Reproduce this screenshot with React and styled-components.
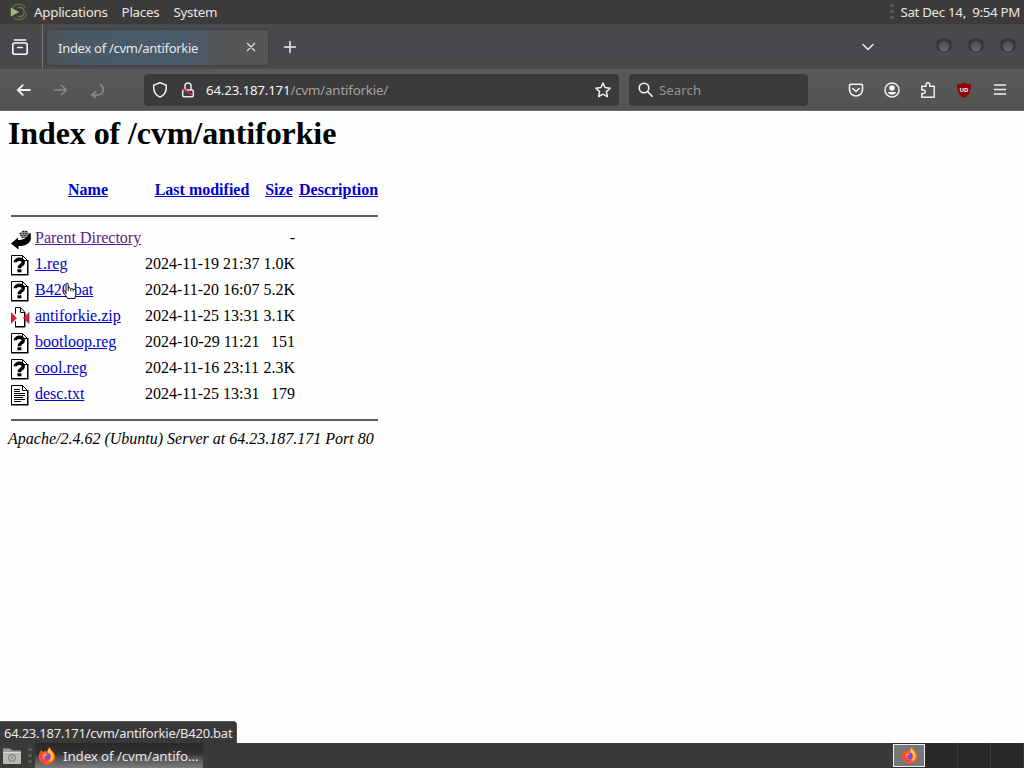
import styled, { createGlobalStyle } from "styled-components";

const files = [
  { icon: "unknown", name: "1.reg", date: "2024-11-19 21:37", size: "1.0K" },
  { icon: "unknown", name: "B420.bat", date: "2024-11-20 16:07", size: "5.2K" },
  { icon: "zip", name: "antiforkie.zip", date: "2024-11-25 13:31", size: "3.1K" },
  { icon: "unknown", name: "bootloop.reg", date: "2024-10-29 11:21", size: "151" },
  { icon: "unknown", name: "cool.reg", date: "2024-11-16 23:11", size: "2.3K" },
  { icon: "text", name: "desc.txt", date: "2024-11-25 13:31", size: "179" },
];

const App = () => (
  <Desktop>
    <GlobalStyle />
    <TopPanel>
      <DistroLogo />
      <MenuItem>Applications</MenuItem>
      <MenuItem>Places</MenuItem>
      <MenuItem>System</MenuItem>
      <Handle />
      <Clock>Sat Dec 14,&nbsp; 9:54 PM</Clock>
    </TopPanel>

    <TabBar>
      <ViewButton>
        <ViewIcon />
      </ViewButton>
      <Tab>
        <TabTitle>Index of /cvm/antiforkie</TabTitle>
        <Icon $size={10} $width={1.2} viewBox="0 0 10 10">
          <path d="M1.4 1.4l7.2 7.2M8.600 1.400L1.400 8.600" />
        </Icon>
      </Tab>
      <NewTab $size={14} viewBox="0 0 14 14">
        <path d="M7 1.500v11M1.500 7h11" />
      </NewTab>
      <ListTabs $size={14} viewBox="0 0 14 14">
        <path d="M2 4.500L7 9.500l5-5" />
      </ListTabs>
      <WindowButtons>
        <WindowButton />
        <WindowButton />
        <WindowButton />
      </WindowButtons>
    </TabBar>

    <NavBar>
      <NavButtons>
        <Icon $size={16} viewBox="0 0 16 16" $width={1.8}>
          <path d="M14 8H2M6.800 3.200L1.800 8L6.800 12.800" />
        </Icon>
        <Icon $size={16} viewBox="0 0 16 16" $color="#8a8a8a">
          <path d="M1.500 8H13M8.400 3.200L13.400 8L8.400 12.800" />
        </Icon>
        <Icon $size={16} viewBox="0 0 16 16" $color="#8a8a8a" $width={1.7}>
          <path d="M10.500 2.500c5 3.500 3 10-2.500 10.500H2.500M5.500 9.500L2 13L5.500 15.500" />
        </Icon>
      </NavButtons>
      <UrlField>
        <Icon $size={16} viewBox="0 0 16 16">
          <path d="M8 .8L14.200 3.100C14.700 8 13 12.700 8 15.200C3 12.700 1.300 8 1.800 3.100Z" strokeLinejoin="round" />
        </Icon>
        <LockIcon />
        <Url>
          <b>64.23.187.171</b>/cvm/antiforkie/
        </Url>
        <Icon $size={16} viewBox="0 0 16 16">
          <path d="M8 1l2.100 4.600 5 .6-3.700 3.400 1 5L8 12.100l-4.400 2.500 1-5L.9 6.200l5-.6z" strokeLinejoin="round" />
        </Icon>
      </UrlField>
      <SearchField>
        <Icon $size={15} viewBox="0 0 15 15" $width={1.6}>
          <circle cx="6" cy="6" r="4.800" />
          <path d="M9.500 9.500l4.700 4.700" />
        </Icon>
        Search
      </SearchField>
      <Tools>
        <Icon $size={16} viewBox="0 0 16 16" $width={1.6}>
          <path d="M2.800 2.200h10.400a1.300 1.300 0 0 1 1.300 1.300V7.500a6.500 6.500 0 0 1-13 0V3.500a1.300 1.300 0 0 1 1.300-1.300zM4.800 6.500L8 9.500l3.200-3" strokeLinejoin="round" />
        </Icon>
        <Icon $size={16} viewBox="0 0 16 16">
          <circle cx="8" cy="8" r="7" />
          <circle cx="8" cy="6" r="2.800" fill="#fbfbfe" stroke="none" />
          <path d="M3.800 10h8.400c-1.200 3.600-7.200 3.600-8.400 0z" fill="#fbfbfe" stroke="none" />
        </Icon>
        <Icon $size={16} viewBox="0 0 16 16">
          <path d="M1.800 4.200h4.200V2.700a1.900 1.900 0 0 1 3.800 0v1.500h4.400v11H1.800v-3.700h1.800a1.700 1.700 0 0 0 0-3.400H1.800z" strokeLinejoin="round" />
        </Icon>
        <Blocker />
        <Icon $size={16} viewBox="0 0 16 16">
          <path d="M2.500 3h11M2.500 7.500h11M2.500 12h11" />
        </Icon>
      </Tools>
    </NavBar>

    <Page>
      <Title>Index of /cvm/antiforkie</Title>
      <Listing>
        <colgroup>
          <col width="22" />
          <col width="108" />
          <col width="116" />
          <col width="34" />
          <col width="81" />
        </colgroup>
        <thead>
          <HeadRow>
            <th />
            <th>
              <Link>Name</Link>
            </th>
            <th>
              <Link>Last modified</Link>
            </th>
            <th>
              <Link>Size</Link>
            </th>
            <th>
              <Link>Description</Link>
            </th>
          </HeadRow>
        </thead>
        <tbody>
          <RuleRow $height={19} $below={8}>
            <td colSpan="5">
              <Rule />
            </td>
          </RuleRow>
          <FileRow>
            <td>
              <FileIcon type="back" />
            </td>
            <td>
              <Link $visited>Parent Directory</Link>
            </td>
            <td />
            <NumberCell>-</NumberCell>
            <td />
          </FileRow>
          {files.map((file) => (
            <FileRow key={file.name}>
              <td>
                <FileIcon type={file.icon} />
              </td>
              <td>
                <Link>{file.name}</Link>
              </td>
              <NumberCell>{file.date}</NumberCell>
              <NumberCell>{file.size}</NumberCell>
              <td />
            </FileRow>
          ))}
          <RuleRow $height={23} $below={9}>
            <td colSpan="5">
              <Rule />
            </td>
          </RuleRow>
        </tbody>
      </Listing>
      <Address>Apache/2.4.62 (Ubuntu) Server at 64.23.187.171 Port 80</Address>
      <HandCursor />
      <StatusPopup>64.23.187.171/cvm/antiforkie/B420.bat</StatusPopup>
    </Page>

    <BottomPanel>
      <FolderIcon />
      <TaskHandle />
      <Task>
        <Firefox size={18} />
        <span>Index of /cvm/antifo…</span>
      </Task>
      <Workspaces>
        <Workspace $active>
          <Firefox size={17} />
        </Workspace>
        <Workspace />
        <Workspace />
        <Workspace />
      </Workspaces>
    </BottomPanel>
  </Desktop>
);

export default App;

const DistroLogo = () => (
  <Logo width="18" height="18" viewBox="0 0 18 18">
    <circle cx="9" cy="9" r="7.800" fill="none" stroke="#5f7047" strokeWidth="1.200" strokeDasharray="18 3 23 5" />
    <path d="M8 4.600a4.700 4.700 0 1 1 0 8.800" fill="none" stroke="#667a4c" strokeWidth="1.300" />
    <path d="M.8 4.600L9.200 9L.8 13.400z" fill="#a3b86c" />
  </Logo>
);

const ViewIcon = () => (
  <svg width="16" height="16" viewBox="0 0 16 16" fill="none" stroke="#fbfbfe" strokeWidth="1.600">
    <path d="M2.500 1h11" strokeLinecap="round" />
    <rect x=".8" y="4" width="14.400" height="11.200" rx="2" />
    <path d="M5.700 8.500h4.600" strokeLinecap="round" />
  </svg>
);

const LockIcon = () => (
  <svg width="16" height="16" viewBox="0 0 16 16" fill="none" stroke="#e8e8ea" strokeWidth="1.500">
    <path d="M5 8V4a3 3 0 0 1 6 0v4" />
    <rect x="2.700" y="8" width="10.600" height="6.800" rx="1.200" />
    <path d="M2.500 6.500L12 13" stroke="#c62a4c" strokeWidth="1.900" />
  </svg>
);

const Blocker = () => (
  <svg width="16" height="16" viewBox="0 0 16 16">
    <path d="M8 .4C10.200 1.700 12.500 2.400 14.800 2.400C15.200 9.500 12.700 13.500 8 15.700C3.300 13.500.8 9.500 1.200 2.400C3.500 2.400 5.800 1.700 8 .4z" fill="#950000" />
    <text x="8" y="10" textAnchor="middle" fill="#fff" fontSize="6" fontWeight="700" fontFamily="Noto Sans, sans-serif">
      UD
    </text>
  </svg>
);

const FileIcon = ({ type }) => (
  <ListIcon width="20" height="22" viewBox="1 0 20 22">
    {type === "back" && (
      <g>
        <path d="M1 15.500L8 9.500V12C12 12 17.500 10.500 18 6L20.800 5V11C20 16 14 18.500 8.500 18V21.500z" fill="#000" />
        <path d="M9.500 5l4-2.500 4 .5 1.500 2.500-2 3.500-4 1-3-2z" fill="#999" />
        <path d="M9.500 5.500h8M10.500 7.500h7M12 3.500h5M11.500 9.500h5" stroke="#222" strokeDasharray="2 1" />
      </g>
    )}
    {(type === "unknown" || type === "text") && (
      <g>
        <path d="M1.500 1.500h11l5 5v14h-16z" fill="#fff" stroke="#000" />
        <path d="M12.500 1.500v5h5z" fill="#fff" stroke="#000" />
        <path d="M1 21h17.500M18 6v15" stroke="#000" />
      </g>
    )}
    {type === "unknown" && (
      <g>
        <path d="M5.300 8.300C5.300 4.300 13.500 4.300 13.300 8.300C13.200 11.200 9.400 10.800 9.300 14.200" fill="none" stroke="#000" strokeWidth="3.400" />
        <rect x="7.400" y="15.300" width="4" height="3" fill="#000" />
      </g>
    )}
    {type === "text" && <path d="M4 5.500h6M4 7.500h6M4 9.500h11M4 11.500h11M4 13.500h9M4 15.500h11M4 17.500h7" stroke="#000" />}
    {type === "zip" && (
      <g>
        <path d="M5.500 1.500h5l4 5v14h-9z" fill="#fff" />
        <path d="M5.500 8V1.500h5l4 4.500V20.500h-9V15M10.500 1.500v5h4" fill="none" stroke="#000" />
        <path d="M5 21h10M15 6v15" stroke="#000" />
        <path d="M1 6.500L6.500 12L1 17.500zM19 6.500L13.500 12L19 17.500z" fill="#dd2337" stroke="#7a2029" strokeWidth=".6" />
      </g>
    )}
  </ListIcon>
);

const Firefox = ({ size }) => (
  <svg width={size} height={size} viewBox="0 0 18 18">
    <path d="M3.300 3.200L5 5.200C6 4 8 4 9 4.500C9.500 2.500 10.500 1 12 .5C12 3 15 3.500 16.200 6.500C20 14 12 19 6.500 17C0 14.500-.8 8 3.300 3.200z" fill="#ff5b2d" />
    <path d="M12 .5C11 4 17 5 15.500 11C14.700 14 12 15 10.500 14.500C14 11 13 8 10 5.500C9.500 3 10.500 1.500 12 .5z" fill="#ffc735" />
    <path d="M2.500 5L5.500 6.500L4 10C4 13 7 14.500 10 13.500C8 17.500 1.500 15 1.300 10z" fill="#ff3d47" />
    <circle cx="9" cy="9.500" r="3.400" fill="#8547d8" />
    <path d="M4.500 7.500c2-1.500 4-.8 5.500 0L7.500 9c-1 .8-.8 1.800.3 2.500C6 12 4.200 10 4.500 7.500z" fill="#ff9136" />
  </svg>
);

const FolderIcon = () => (
  <Folder width="20" height="18" viewBox="0 0 20 18">
    <path d="M1 1.500h7l2 2h9v4H1z" fill="#9a9d94" />
    <rect x="1" y="5" width="18" height="12" rx="1" fill="#b8bab2" />
    <path d="M1 5.500h18" stroke="#dadcd4" />
    <circle cx="10" cy="11" r="3.300" fill="none" stroke="#85887f" strokeWidth="1.300" />
    <path d="M9 9.500l2.500 1.500L9 12.500z" fill="#85887f" />
  </Folder>
);

const HandCursor = () => (
  <Cursor width="16" height="18" viewBox="0 0 16 18">
    <path
      d="M4 11.500V2.300C4 .7 6.200.7 6.200 2.300V6.200C7.500 5.300 8.600 5.800 8.700 6.700C9.800 6.100 11 6.600 11.100 7.500C12.500 7 13.800 7.600 13.800 9V12.500C13.800 14 13 14.700 13 16.500H5.500C5 14.500 2.200 12 1.200 9.800C.8 8.500 2.200 8 3 9z"
      fill="#fff"
      stroke="#111"
    />
    <path d="M6.200 6v3M8.700 7v2.500M11.100 7.500v2" stroke="#111" strokeWidth=".9" />
  </Cursor>
);

const GlobalStyle = createGlobalStyle`
  * {
    box-sizing: border-box;
  }
  body {
    margin: 0;
    overflow: hidden;
  }
`;

const Desktop = styled.div`
  display: flex;
  flex-direction: column;
  width: 1024px;
  height: 768px;
  font-family: "Noto Sans", sans-serif;
  font-size: 13.33px;
  color: #e6e6e6;
`;

const TopPanel = styled.div`
  display: flex;
  align-items: center;
  height: 24px;
  padding: 0 4px 0 10px;
  background: #3c3b39;
  letter-spacing: -0.25px;
`;

const Logo = styled.svg`
  margin-right: 6px;
`;

const MenuItem = styled.span`
  margin-right: 14px;
  white-space: nowrap;
`;

const Handle = styled.div`
  width: 4px;
  height: 16px;
  margin-left: auto;
  background: repeating-linear-gradient(#575754 0 3px, transparent 3px 6px);
`;

const Clock = styled.span`
  margin-left: 6px;
  letter-spacing: -0.32px;
  white-space: nowrap;
`;

const TabBar = styled.div`
  display: flex;
  align-items: center;
  height: 45px;
  background: linear-gradient(#4b4b4c, #48474d 45%, #4b4b4c);
`;

const ViewButton = styled.div`
  display: flex;
  align-items: center;
  width: 43px;
  height: 45px;
  padding-left: 12px;
  border-right: 1px solid #747477;
`;

const Tab = styled.div`
  display: flex;
  align-items: center;
  justify-content: space-between;
  width: 221px;
  height: 35px;
  margin: 1px 0 0 4px;
  padding: 0 12px 0 11px;
  border-radius: 3px;
  background: linear-gradient(90deg, #4d5358, #4a5966 15%, #4a5b69 65%, #555 82%, #575655);
  box-shadow: 0 0 2px rgba(0, 0, 0, 0.5);
`;

const TabTitle = styled.span`
  padding-top: 1px;
  white-space: nowrap;
  font-size: 13px;
  letter-spacing: -0.28px;
`;

const Icon = styled.svg`
  flex: none;
  width: ${(props) => props.$size}px;
  height: ${(props) => props.$size}px;
  fill: none;
  stroke: ${(props) => props.$color || "#f0f0f2"};
  stroke-width: ${(props) => props.$width || 1.5};
  stroke-linecap: round;
`;

const NewTab = styled(Icon)`
  margin-left: 15px;
`;

const ListTabs = styled(Icon)`
  margin-left: auto;
`;

const WindowButtons = styled.div`
  display: flex;
  gap: 16px;
  margin: 0 8px 2px 61px;
`;

const WindowButton = styled.div`
  width: 16px;
  height: 16px;
  border: 3px solid #38383b;
  border-bottom-color: #454549;
  border-radius: 50%;
  background: linear-gradient(#4c4c50, #6a6a6e);
  box-shadow: 0 1px 1px #59595c;
`;

const NavBar = styled.div`
  display: flex;
  align-items: center;
  height: 42px;
  border-bottom: 1px solid #6a6a6b;
  background: linear-gradient(#5a5a5a, #535352);
`;

const NavButtons = styled.div`
  display: flex;
  gap: 21px;
  width: 144px;
  padding-left: 16px;
`;

const Field = styled.div`
  display: flex;
  align-items: center;
  height: 32px;
  border-radius: 4px;
  background: #3b3b3b;
`;

const UrlField = styled(Field)`
  gap: 12px;
  width: 475px;
  padding: 0 8px;
`;

const Url = styled.span`
  flex: 1;
  margin-left: -2px;
  color: #a2a2a2;
  letter-spacing: -0.19px;

  b {
    font-weight: 400;
    color: #f3f3f3;
  }
`;

const SearchField = styled(Field)`
  gap: 6px;
  width: 179px;
  margin-left: 10px;
  padding-left: 9px;
  color: #929292;
`;

const Tools = styled.div`
  display: flex;
  align-items: center;
  gap: 20px;
  margin-left: 40px;
`;

const Page = styled.div`
  position: relative;
  height: 632px;
  padding: 4px 8px;
  background: #fefefe;
  color: #000;
  font-family: "Liberation Serif", serif;
  font-size: 16px;
`;

const Title = styled.h1`
  margin: 0 0 23px;
  font-size: 32px;
  line-height: 37px;
  letter-spacing: -0.1px;
`;

const Listing = styled.table`
  width: 373px;
  table-layout: fixed;
  border-spacing: 2px 0;
  line-height: 18px;
  white-space: nowrap;

  td,
  th {
    padding: 0 1px;
  }
`;

const HeadRow = styled.tr`
  height: 31px;

  th {
    padding-bottom: 1px;
  }
`;

const RuleRow = styled.tr`
  height: ${(props) => props.$height}px;

  td {
    padding-bottom: ${(props) => props.$below}px;
    vertical-align: bottom;
  }
`;

const Rule = styled.hr`
  height: 2px;
  margin: 0;
  border: 0;
  background: #5e5e5e;
`;

const FileRow = styled.tr`
  height: 26px;
`;

const NumberCell = styled.td`
  text-align: right;
`;

const Link = styled.a`
  color: ${(props) => (props.$visited ? "#551a8b" : "#0000cf")};
  text-decoration: underline;
`;

const ListIcon = styled.svg`
  display: block;
  margin-top: 2px;
`;

const Address = styled.address`
  line-height: 18px;
`;

const Cursor = styled.svg`
  position: absolute;
  left: 62px;
  top: 171px;
`;

const StatusPopup = styled.div`
  position: absolute;
  left: 0;
  bottom: 0;
  width: 237px;
  height: 22px;
  padding-left: 4px;
  border-top: 1px solid #555;
  border-right: 1px solid #555;
  border-radius: 0 4px 0 0;
  background: #393939;
  color: #e8e8e8;
  font-family: "Noto Sans", sans-serif;
  font-size: 13px;
  letter-spacing: -0.24px;
  line-height: 22px;
  white-space: nowrap;
`;

const BottomPanel = styled.div`
  display: flex;
  align-items: center;
  height: 25px;
  background: #3a3a39;
`;

const Folder = styled.svg`
  margin-left: 2px;
`;

const TaskHandle = styled(Handle)`
  margin: 0 3px 0 6px;
`;

const Task = styled.div`
  display: flex;
  align-items: center;
  gap: 7px;
  width: 168px;
  height: 25px;
  padding-left: 3px;
  background: linear-gradient(#292929 0%, #333 45%, #4b4b4b 55%, #7c7c7c 100%);
  letter-spacing: -0.1px;
  white-space: nowrap;
`;

const Workspaces = styled.div`
  display: flex;
  align-items: center;
  margin-left: auto;
  height: 25px;
  background: #2b2b2b;
`;

const Workspace = styled.div`
  display: flex;
  align-items: center;
  justify-content: center;
  width: ${(props) => (props.$active ? 32 : 33)}px;
  height: ${(props) => (props.$active ? 23 : 25)}px;
  border: ${(props) => (props.$active ? "1px solid #f1f1f1" : "0")};
  border-right: 1px solid ${(props) => (props.$active ? "#f1f1f1" : "#3d3d3d")};
  background: ${(props) => (props.$active ? "#777" : "#292929")};
`;
